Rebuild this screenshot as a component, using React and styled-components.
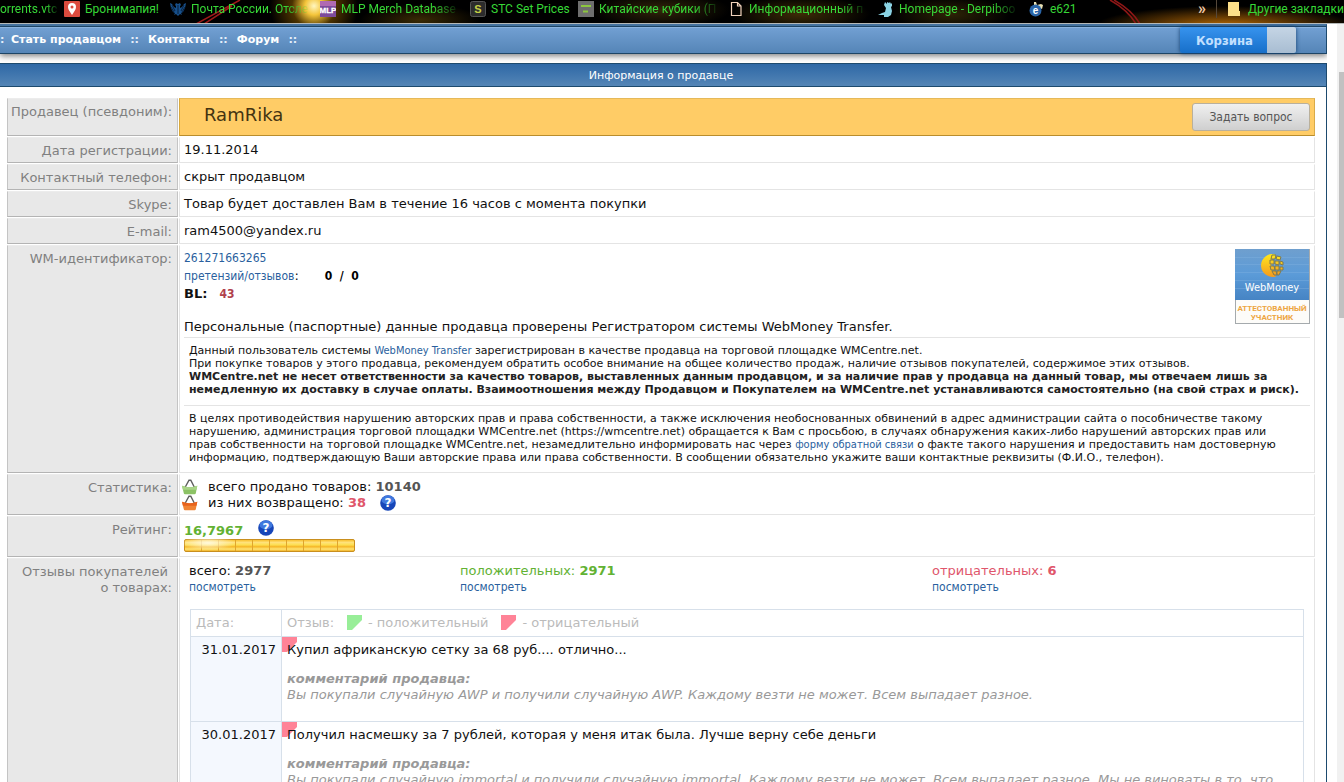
import React from "react";
import styled, { createGlobalStyle } from "styled-components";

const ui = '"DejaVu Sans", Verdana, sans-serif';
const narrow = '"DejaVu Sans Condensed", Tahoma, "DejaVu Sans", sans-serif';
const chrome = 'Roboto, "Noto Sans", sans-serif';

const Global = createGlobalStyle`
  *, *::before, *::after { box-sizing: border-box; }
  html, body { margin: 0; height: 100%; overflow: hidden; }
  body { background: #fff; font: 13px/16px ${ui}; color: #111; }
  a { text-decoration: none; }
`;

const Shell = styled.div`
  display: flex;
  flex-direction: column;
  height: 100vh;
  overflow: hidden;
`;

/* ---------- bookmarks bar ---------- */
const Bookmarks = styled.nav`
  position: relative;
  flex: none;
  display: flex;
  align-items: flex-start;
  height: 24px;
  overflow: hidden;
  border-bottom: 1px solid #b4b8b8;
  background:
    radial-gradient(circle at 314px 6px, #fff6c0 0, #f4c53a 9px, rgba(150, 100, 0, 0.5) 22px, transparent 44px),
    radial-gradient(ellipse 130px 20px at 1225px 26px, #b86a04, transparent),
    radial-gradient(ellipse 60px 16px at 420px 20px, #3a2a04, transparent),
    radial-gradient(ellipse 70px 18px at 660px 10px, #33260a, transparent),
    radial-gradient(ellipse 70px 18px at 800px 14px, #3d2c06, transparent),
    radial-gradient(ellipse 60px 18px at 950px 14px, #2e2306, transparent),
    #000;
`;
const Streaks = styled.svg`
  position: absolute;
  inset: 0;
`;
const Bookmark = styled.a`
  position: relative;
  flex: none;
  display: flex;
  gap: 5px;
  width: ${(p) => p.$w}px;
  height: 18px;
  color: #37d837;
  font: 12px/18px ${chrome};
  svg { flex: none; margin-top: 1px; }
`;
const BookmarkText = styled.span`
  white-space: nowrap;
  mask-image: ${(p) => (p.$fade ? "linear-gradient(90deg, #000 80%, rgba(0, 0, 0, 0.15))" : "none")};
`;
const More = styled.button`
  position: relative;
  margin-left: auto;
  padding: 0 10px 0 0;
  height: 18px;
  border: 0;
  border-right: 1px solid #55483a;
  background: none;
  color: #f3c9a8;
  font: 700 16px/14px ${chrome};
`;
const OtherBookmarks = styled(Bookmark)`
  margin-left: 10px;
`;

/* ---------- page ---------- */
const Viewport = styled.div`
  flex: 1;
  min-height: 0;
  display: flex;
`;
const Page = styled.div`
  flex: 1;
  min-width: 0;
  margin-right: 10px;
  overflow: hidden;
`;
const Scrollbar = styled.div`
  flex: none;
  width: 7px;
  padding: 48px 0 0 2px;
  background: #f1f1f1;
`;
const Thumb = styled.div`
  height: 246px;
  background: #c1c1c1;
`;
const Nav = styled.nav`
  display: flex;
  height: 30px;
  margin-bottom: 9px;
  border-top: 2px solid #44729f;
  border-right: 1px solid #1d4a6e;
  border-bottom: 1px solid #1d4566;
  background: linear-gradient(#1d4566 0 1px, #8ab3df 1px 2px, #719fd2 2px, #5585b7);
  box-shadow: 0 2px 6px rgba(0, 0, 0, 0.5);
  color: #e4eefa;
  font: 700 11px/28px ${ui};
  white-space: pre;
`;
const NavLink = styled.a`
  color: #fff;
`;
const NavDots = styled.span`
  width: 27px;
  text-align: center;
`;
const NavStart = styled.span`
  width: 11px;
`;
const Cart = styled.button`
  display: flex;
  justify-content: space-between;
  width: 116px;
  height: 26px;
  margin: 1px 30px 0 auto;
  padding: 0 0 0 16px;
  border: 0;
  border-radius: 2px;
  background: linear-gradient(#3793ee, #176fc9);
  box-shadow: 0 0 4px #123f70;
  color: #c2e0ff;
  font: 700 13px/27px ${narrow};
  &::after {
    content: "";
    width: 29px;
    height: 26px;
    border-radius: 0 2px 2px 0;
    background: linear-gradient(#c5d5e5, #a8bdd2);
  }
`;
const Panel = styled.main`
  border-right: 1px solid #1d4a6e;
`;
const PanelTitle = styled.h1`
  margin: 0;
  padding: 1px 4px 0 0;
  border: solid #1d4a6e;
  border-width: 1px 0;
  background: linear-gradient(#2e68a6, #5485b6);
  color: #fff;
  font: 11px/21px ${ui};
  text-align: center;
`;
const PanelBody = styled.div`
  padding: 10px 10px 0 6px;
`;

/* ---------- seller table ---------- */
const InfoTable = styled.table`
  width: 100%;
  border-collapse: separate;
  border-spacing: 1px;
  table-layout: fixed;
`;
const LabelCol = styled.col`
  width: 171px;
`;
const Label = styled.th`
  padding: 5px 5px 3px 3px;
  border: 1px solid #c4c4c4;
  border-top-color: #ececec;
  border-bottom-color: #b4b4b4;
  background: #e8e8e8;
  color: #808080;
  font-weight: 400;
  text-align: right;
  vertical-align: top;
  white-space: nowrap;
`;
const Value = styled.td`
  padding: 4px;
  border: 1px solid #e4e4e4;
  border-top-color: #fff;
  vertical-align: top;
`;
const SellerValue = styled(Value)`
  padding: 4px 4px 3px 24px;
  border-color: #e5b95a #d9ab49 #b98d2d #d9a93c;
  background: #ffcc66;
`;
const WmValue = styled(Value)`
  padding-top: 3px;
`;
const StatValue = styled(Value)`
  padding: 4px 4px 3px 2px;
`;
const RatingValue = styled(Value)`
  padding-top: 3px;
`;
const SellerRow = styled.div`
  display: flex;
  justify-content: space-between;
  align-items: flex-start;
`;
const SellerName = styled.h2`
  margin: 0;
  color: #443311;
  font: 18px/23px ${ui};
`;
const AskButton = styled.button`
  width: 118px;
  height: 28px;
  padding: 0;
  margin-bottom: 1px;
  border: 1px solid #b9b09c;
  border-radius: 3px;
  background: linear-gradient(#f0f0f0, #cfcfcf);
  color: #555;
  font: 12px/27px ${narrow};
`;
const Link = styled.a`
  color: #2a5f9e;
  font-family: ${narrow};
  font-size: ${(p) => (p.$small ? "11px" : "12px")};
`;
const WmTop = styled.div`
  display: flex;
  justify-content: space-between;
  min-height: 89px;
  border-bottom: 1px solid #e4e4e4;
  line-height: 17px;
`;
const Verified = styled.p`
  margin: 16px 0 0;
`;
const Pixel = styled.b`
  margin-left: ${(p) => p.$gap}px;
  color: ${(p) => p.$color};
  font: 700 12px/16px ${narrow};
`;
const Notice = styled.p`
  margin: 0;
  padding: 6px 5px 9px;
  font-size: 11px;
  line-height: 13px;
  white-space: nowrap;
  & + & { padding: 6px 5px 4px; border-top: 1px solid #e4e4e4; }
  b { color: #222; }
`;
const StatLine = styled.div`
  display: flex;
  align-items: center;
  height: 16px;
  svg { flex: none; }
`;
const StatText = styled.span`
  margin: 0 14px 0 10px;
`;
const Strong = styled.b`
  color: ${(p) => p.$color || "#555"};
`;
const RatingLine = styled.div`
  display: flex;
  align-items: flex-start;
  gap: 15px;
  height: 19px;
  line-height: 22px;
`;
const Meter = styled.svg`
  display: block;
`;
const Totals = styled.div`
  display: grid;
  grid-template-columns: 271fr 472fr 378fr;
  padding: 0 0 14px 5px;
`;
const Total = styled.div`
  color: ${(p) => p.$color};
`;

/* ---------- reviews ---------- */
const ReviewWrap = styled.div`
  padding: 0 6px;
`;
const ReviewTable = styled.table`
  width: 100%;
  border-collapse: collapse;
  td, th { border: 1px solid #d7e0ea; vertical-align: top; text-align: left; }
`;
const Head = styled.th`
  width: ${(p) => (p.$w ? p.$w + "px" : "auto")};
  padding: 5px;
  color: #bbb;
  font-weight: 400;
`;
const Legend = styled.div`
  display: flex;
  align-items: center;
`;
const LegendItem = styled.span`
  display: flex;
  gap: 5px;
  margin-left: 13px;
`;
const DateCell = styled.td`
  padding: 5px 0;
  background: #f4f8fe;
  time { display: block; padding-right: 5px; text-align: right; }
`;
const ReviewCell = styled.td`
  position: relative;
  padding: 5px 5px 18px;
  white-space: nowrap;
`;
const Corner = styled.svg`
  position: absolute;
  left: 0;
  top: 0;
`;
const ReviewText = styled.p`
  position: relative;
  margin: 0 0 13px;
`;
const Answer = styled.div`
  color: #999;
  font-style: italic;
`;
const AnswerTitle = styled.b`
  display: block;
`;

const green = "#62b233";
const red = "#e0566b";

const Tag = ({ fill }) => (
  <svg width="16" height="15" viewBox="0 0 16 15"><path d="M0 0h15v5L5 15H0z" fill={fill} /></svg>
);

const Help = () => (
  <svg width="16" height="16" viewBox="0 0 16 16">
    <circle cx="8" cy="8" r="7.800" fill="#1746b8" />
    <ellipse cx="8" cy="5" rx="6.500" ry="4.400" fill="#3f78de" />
    <text x="8" y="12.400" textAnchor="middle" fontFamily="DejaVu Sans" fontWeight="700" fontSize="12" fill="#fff">?</text>
  </svg>
);

const Basket = ({ top, bottom }) => (
  <svg width="16" height="16" viewBox="0 0 16 16">
    <path d="M3 8.500 7 1.200h1.800L12.500 8.500" fill="none" stroke="#5d5d5d" strokeWidth="1.400" />
    <path d="M0 6.800q4 1.600 7.700 1.400 4 .2 7.600-1.400l-1.500 7.400q-.2 1-1.200 1H3q-1 0-1.200-1z" fill={bottom} />
    <path d="M0 6.800q4 1.600 7.700 1.400 4 .2 7.600-1.400l-.8 4H.9z" fill={top} />
  </svg>
);

const RatingBar = () => (
  <Meter width="171" height="13" viewBox="0 0 171 13" role="img" aria-label="Рейтинг">
    <defs>
      <linearGradient id="gold" x2="0" y2="1">
        <stop offset="0" stopColor="#f7b920" /><stop offset=".25" stopColor="#ffe27a" />
        <stop offset=".45" stopColor="#fddf50" /><stop offset=".6" stopColor="#f6b728" />
        <stop offset=".8" stopColor="#ffe574" /><stop offset="1" stopColor="#eea716" />
      </linearGradient>
      <radialGradient id="shine">
        <stop offset="0" stopColor="#fff9dc" /><stop offset="1" stopColor="#fff9dc" stopOpacity="0" />
      </radialGradient>
    </defs>
    <rect x=".5" y=".5" width="170" height="12" rx="1.500" fill="url(#gold)" stroke="#c98f1e" />
    {[17, 34, 51, 68, 85, 102, 119, 136, 153].map((x) => (
      <path key={x} d={`M${x + 0.5} 1v11`} stroke="#e0a52c" />
    ))}
    <ellipse cx="24" cy="4" rx="28" ry="7" fill="url(#shine)" />
  </Meter>
);

const WebMoney = () => (
  <svg width="75" height="75" viewBox="0 0 75 75" role="img" aria-label="WebMoney">
    <defs>
      <linearGradient id="sky" x2="0" y2="1">
        <stop offset="0" stopColor="#6f9fce" /><stop offset=".5" stopColor="#5b9bd8" /><stop offset="1" stopColor="#4684c4" />
      </linearGradient>
      <linearGradient id="sun" x2="0" y2="1">
        <stop offset="0" stopColor="#ffe81c" /><stop offset="1" stopColor="#f39a1e" />
      </linearGradient>
    </defs>
    <rect width="75" height="75" fill="#a5aaad" />
    <rect x="1" width="73" height="74" fill="#fdfcf9" />
    <rect width="74" height="51" fill="url(#sky)" />
    <path d="M0 8.500h74M0 15.500h74M0 23.500h74M0 31.500h74M0 39.500h74" stroke="#82b3e2" opacity=".4" />
    <path d="M40 5.200A11.500 11.500 0 1 0 41 27.400Q32 16 40 5.200z" fill="url(#sun)" />
    <g fill="url(#sun)" stroke="#7d7a52" strokeWidth="1">
      <path d="M37 6l4 0-1 4-4 0zM42 7l4 1-1 3-4-1zM35 11l4 0 0 4-4 0zM40 12l4 0 0 4-4-1zM45 12l3 1 0 3-3-1zM35 17l4 0 1 4-4 0zM40 17l4 0 0 4-4 0zM45 18l3 0 0 3-3 0zM37 22l4 0 1 4-3 0zM42 22l4 0-2 4-2 0z" />
    </g>
    <text x="37" y="42" textAnchor="middle" fontFamily="DejaVu Sans Condensed" fontSize="11" fill="#fff">WebMoney</text>
    <text x="37" y="62" textAnchor="middle" fontFamily="Roboto" fontWeight="700" fontSize="8" fill="#eda541">АТТЕСТОВАННЫЙ</text>
    <text x="37" y="71" textAnchor="middle" fontFamily="Roboto" fontWeight="700" fontSize="8" fill="#eda541">УЧАСТНИК</text>
  </svg>
);

const Fav = ({ kind }) => (
  <svg width="16" height="16" viewBox="0 0 16 16">
    {kind === "pin" && <><rect width="16" height="16" rx="1" fill="#dc4b3e" /><path d="M8 14C6 10.500 4 9 4 6a4 4 0 0 1 8 0c0 3-2 4.500-4 8z" fill="#fff" /><circle cx="8" cy="6" r="1.500" fill="#dc4b3e" /></>}
    {kind === "eagle" && <>
      <path d="M0 2l2 1 2 3 2 1V5L5 4l1-2 2 1 2-1 1 2-1 1v2l2-1 2-3 2-1-1 5-2 4-2 1 1 2-2-1-2 2-2-2-2 1 1-2-2-1-2-4z" fill="#17508c" />
      <path d="M2 4l3 6M1 6l3 5M14 4l-3 6M15 6l-3 5M8 4v9" stroke="#05152a" strokeWidth=".8" />
    </>}
    {kind === "mlp" && <><rect width="16" height="16" fill="#7d4b9b" /><rect width="16" height="5" fill="#b06ab2" /><text x="8" y="12" textAnchor="middle" fontFamily="Liberation Sans" fontWeight="700" fontSize="8" fill="#fff" stroke="#fff" strokeWidth=".3">MLP</text></>}
    {kind === "s" && <><rect x=".5" y=".5" width="15" height="15" rx="2" fill="#2c2c2c" stroke="#555" /><text x="8" y="12" textAnchor="middle" fontFamily="Liberation Sans" fontWeight="700" fontSize="11" fill="#c3cf45">S</text></>}
    {kind === "cube" && <><rect width="16" height="16" fill="#6e6e6e" /><path d="M3 5h10M5 10.500h5" stroke="#8cc63f" strokeWidth="2" /></>}
    {kind === "doc" && <path d="M3.500 1.500h6l3.500 3.500v9.500H3.500zM9.500 1.500V5H13" fill="none" stroke="#f0d2bb" strokeWidth="1.200" />}
    {kind === "derpi" && <path d="M7 1l2 2 0-2 2 1 1-1 1 2 1-1 0 3-1 1 1 4-1 4-3 2-4 0 0-2-6 0 4-2 3-1 1-4-2-3z" fill="#8bd3e4" />}
    {kind === "e" && <><path d="M5 5V1h2l1 3 4-1 2 1-1 4z" fill="#e9e1b4" /><circle cx="6.500" cy="9.500" r="6" fill="#2a65a8" /><text x="6.500" y="13" textAnchor="middle" fontFamily="Liberation Sans" fontWeight="700" fontSize="10" fill="#fff">e</text></>}
    {kind === "folder" && <path d="M1 1h11v9h1v5H1z" fill="#fde08a" />}
  </svg>
);

const bookmarks = [
  ["pin", "Бронимапия!", 106],
  ["eagle", "Почта России. Отсле", 150, true],
  ["mlp", "MLP Merch Database", 150, true],
  ["s", "STC Set Prices", 108],
  ["cube", "Китайские кубики (П", 150, true],
  ["doc", "Информационный п", 150, true],
  ["derpi", "Homepage - Derpiboo", 151, true],
  ["e", "e621", 60],
];

const reviews = [
  ["31.01.2017", "Купил африканскую сетку за 68 руб.... отлично...", "Вы покупали случайную AWP и получили случайную AWP. Каждому везти не может. Всем выпадает разное."],
  ["30.01.2017", "Получил насмешку за 7 рублей, которая у меня итак была. Лучше верну себе деньги", "Вы покупали случайную immortal и получили случайную immortal. Каждому везти не может. Всем выпадает разное. Мы не виноваты в то, что"],
];

const simpleRows = [
  ["Дата регистрации:", "19.11.2014"],
  ["Контактный телефон:", "скрыт продавцом"],
  ["Skype:", "Товар будет доставлен Вам в течение 16 часов с момента покупки"],
  ["E-mail:", "ram4500@yandex.ru"],
];

export default function App() {
  return (
    <Shell>
      <Global />
      <Bookmarks>
        <Streaks width="1344" height="24" aria-hidden="true">
          <path d="M196 24L240 0M204 24L232 6" stroke="#a01a1a" strokeWidth="1.500" />
          <path d="M1110 0Q1128 10 1136 24M1114 0Q1132 10 1140 24" fill="none" stroke="#8e1717" strokeWidth="1.500" />
        </Streaks>
        <Bookmark href="#" $w={64}><BookmarkText $fade>orrents.vtc</BookmarkText></Bookmark>
        {bookmarks.map(([kind, text, w, fade]) => (
          <Bookmark href="#" key={kind} $w={w}><Fav kind={kind} /><BookmarkText $fade={fade}>{text}</BookmarkText></Bookmark>
        ))}
        <More type="button">»</More>
        <OtherBookmarks href="#" $w={117}><Fav kind="folder" /><BookmarkText>Другие закладки</BookmarkText></OtherBookmarks>
      </Bookmarks>

      <Viewport>
        <Page>
          <Nav>
            <NavStart>:</NavStart>
            <NavLink href="#">Стать продавцом</NavLink><NavDots>::</NavDots>
            <NavLink href="#">Контакты</NavLink><NavDots>::</NavDots>
            <NavLink href="#">Форум</NavLink><NavDots>::</NavDots>
            <Cart type="button">Корзина</Cart>
          </Nav>
          <Panel>
            <PanelTitle>Информация о продавце</PanelTitle>
            <PanelBody>
              <InfoTable>
                <colgroup><LabelCol /><col /></colgroup>
                <tbody>
                  <tr>
                    <Label scope="row">Продавец (псевдоним):</Label>
                    <SellerValue>
                      <SellerRow>
                        <SellerName>RamRika</SellerName>
                        <AskButton type="button">Задать вопрос</AskButton>
                      </SellerRow>
                    </SellerValue>
                  </tr>
                  {simpleRows.map(([k, v]) => (
                    <tr key={k}><Label scope="row">{k}</Label><Value>{v}</Value></tr>
                  ))}
                  <tr>
                    <Label scope="row">WM-идентификатор:</Label>
                    <WmValue>
                      <WmTop>
                        <div>
                          <div><Link href="#">261271663265</Link></div>
                          <div><Link href="#">претензий/отзывов</Link>:<Pixel $gap={26} $color="#000">0&nbsp; /&nbsp; 0</Pixel></div>
                          <div><b>BL:</b><Pixel $gap={12} $color="#b0404c">43</Pixel></div>
                          <Verified>Персональные (паспортные) данные продавца проверены Регистратором системы WebMoney Transfer.</Verified>
                        </div>
                        <WebMoney />
                      </WmTop>
                      <Notice>
                        Данный пользователь системы <Link href="#" $small>WebMoney Transfer</Link> зарегистрирован в качестве продавца на торговой площадке WMCentre.net.<br />
                        При покупке товаров у этого продавца, рекомендуем обратить особое внимание на общее количество продаж, наличие отзывов покупателей, содержимое этих отзывов.<br />
                        <b>WMCentre.net не несет ответственности за качество товаров, выставленных данным продавцом, и за наличие прав у продавца на данный товар, мы отвечаем лишь за<br />
                        немедленную их доставку в случае оплаты. Взаимоотношения между Продавцом и Покупателем на WMCentre.net устанавливаются самостоятельно (на свой страх и риск).</b>
                      </Notice>
                      <Notice>
                        В целях противодействия нарушению авторских прав и права собственности, а также исключения необоснованных обвинений в адрес администрации сайта о пособничестве такому<br />
                        нарушению, администрация торговой площадки WMCentre.net (https://wmcentre.net) обращается к Вам с просьбою, в случаях обнаружения каких-либо нарушений авторских прав или<br />
                        прав собственности на торговой площадке WMCentre.net, незамедлительно информировать нас через <Link href="#" $small>форму обратной связи</Link> о факте такого нарушения и предоставить нам достоверную<br />
                        информацию, подтверждающую Ваши авторские права или права собственности. В сообщении обязательно укажите ваши контактные реквизиты (Ф.И.О., телефон).
                      </Notice>
                    </WmValue>
                  </tr>
                  <tr>
                    <Label scope="row">Статистика:</Label>
                    <StatValue>
                      <StatLine><Basket top="#a9d487" bottom="#8cc265" /><StatText>всего продано товаров: <Strong>10140</Strong></StatText></StatLine>
                      <StatLine><Basket top="#e8631c" bottom="#f08434" /><StatText>из них возвращено: <Strong $color={red}>38</Strong></StatText><Help /></StatLine>
                    </StatValue>
                  </tr>
                  <tr>
                    <Label scope="row">Рейтинг:</Label>
                    <RatingValue>
                      <RatingLine><Strong $color={green}>16,7967</Strong><Help /></RatingLine>
                      <RatingBar />
                    </RatingValue>
                  </tr>
                  <tr>
                    <Label scope="row">Отзывы покупателей&nbsp;<br />о товарах:</Label>
                    <Value>
                      <Totals>
                        <Total $color="#111">всего: <Strong>2977</Strong><br /><Link href="#">посмотреть</Link></Total>
                        <Total $color={green}>положительных: <Strong $color={green}>2971</Strong><br /><Link href="#">посмотреть</Link></Total>
                        <Total $color={red}>отрицательных: <Strong $color={red}>6</Strong><br /><Link href="#">посмотреть</Link></Total>
                      </Totals>
                      <ReviewWrap>
                        <ReviewTable>
                          <thead>
                            <tr>
                              <Head $w={91}>Дата:</Head>
                              <Head>
                                <Legend>
                                  Отзыв:
                                  <LegendItem><Tag fill="#98ee98" />- положительный</LegendItem>
                                  <LegendItem><Tag fill="#ff8397" />- отрицательный</LegendItem>
                                </Legend>
                              </Head>
                            </tr>
                          </thead>
                          <tbody>
                            {reviews.map(([date, text, answer]) => (
                              <tr key={date}>
                                <DateCell><time>{date}</time></DateCell>
                                <ReviewCell>
                                  <Corner width="15" height="15" aria-hidden="true"><path d="M0 0h15v5L5 15H0z" fill="#ff8397" /></Corner>
                                  <ReviewText>{text}</ReviewText>
                                  <Answer><AnswerTitle>комментарий продавца:</AnswerTitle>{answer}</Answer>
                                </ReviewCell>
                              </tr>
                            ))}
                          </tbody>
                        </ReviewTable>
                      </ReviewWrap>
                    </Value>
                  </tr>
                </tbody>
              </InfoTable>
            </PanelBody>
          </Panel>
        </Page>
        <Scrollbar><Thumb /></Scrollbar>
      </Viewport>
    </Shell>
  );
}
